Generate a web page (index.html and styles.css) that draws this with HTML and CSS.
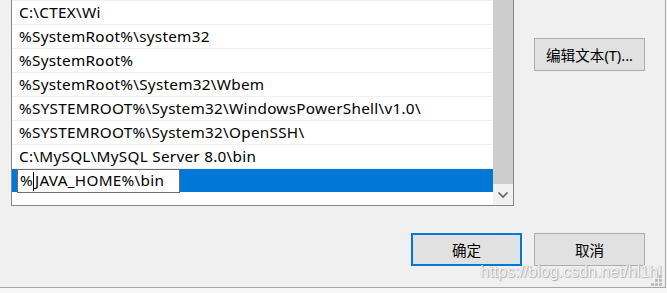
FILE: index.html
```html
<!DOCTYPE html>
<html lang="zh">
<head>
<meta charset="utf-8">
<link rel="stylesheet" href="styles.css">
</head>
<body>
<div class="dialog">
  <div class="main">
    <div class="listbox">
      <div class="rows">
        <div class="row">C:\CTEX\Wi</div>
        <div class="row">%SystemRoot%\system32</div>
        <div class="row">%SystemRoot%</div>
        <div class="row">%SystemRoot%\System32\Wbem</div>
        <div class="row">%SYSTEMROOT%\System32\WindowsPowerShell\v1.0\</div>
        <div class="row">%SYSTEMROOT%\System32\OpenSSH\</div>
        <div class="row">C:\MySQL\MySQL Server 8.0\bin</div>
        <div class="row selected"><span class="edit">%<span class="caret"></span>JAVA_HOME%\bin</span></div>
      </div>
      <div class="scrollbar">
        <div class="thumb"></div>
        <div class="arrow">
          <svg width="12" height="8" viewBox="0 0 12 8"><path d="M1.5 1.5 L6 6 L10.5 1.5" fill="none" stroke="#606060" stroke-width="1.6"/></svg>
        </div>
      </div>
    </div>
    <div class="side">
      <button class="btn">编辑文本(T)...</button>
    </div>
  </div>
  <div class="footer">
    <button class="btn primary">确定</button>
    <button class="btn">取消</button>
  </div>
</div>
<div class="watermark">https://blog.csdn.net/hl1hl</div>
<svg class="grip" width="12" height="12" viewBox="0 0 12 12">
  <rect x="8" y="0" width="3" height="3" fill="#bdbdbd"/>
  <rect x="4" y="4" width="3" height="3" fill="#bdbdbd"/>
  <rect x="8" y="4" width="3" height="3" fill="#bdbdbd"/>
  <rect x="0" y="8" width="3" height="3" fill="#bdbdbd"/>
  <rect x="4" y="8" width="3" height="3" fill="#bdbdbd"/>
  <rect x="8" y="8" width="3" height="3" fill="#bdbdbd"/>
</svg>
</body>
</html>
```

FILE: styles.css
```css
* { box-sizing: border-box; }
html, body { margin: 0; padding: 0; }
body {
  width: 667px;
  height: 293px;
  background: #f7f7f7;
  overflow: hidden;
  position: relative;
  font-family: "Noto Sans", "Noto Sans CJK SC", sans-serif;
  font-size: 15.3px;
  color: #000;
}
.dialog {
  width: 666px;
  height: 288px;
  background: #f0f0f0;
  border-right: 1px solid #a5a5a5;
  border-bottom: 1px solid #a5a5a5;
  display: flex;
  flex-direction: column;
}
.main {
  display: flex;
}
.listbox {
  margin-left: 11px;
  margin-top: -1px;
  width: 503px;
  height: 207px;
  border: 1px solid #828790;
  display: flex;
  background: #fff;
}
.rows {
  flex: 1;
  overflow: hidden;
  background: #fff;
}
.row {
  height: 24px;
  border-top: 1px solid #f0f0f0;
  padding-left: 7px;
  line-height: 23px;
  letter-spacing: 0.27px;
  white-space: nowrap;
}
.row.selected {
  background: #0078d7;
  padding-left: 5px;
  display: flex;
  align-items: flex-start;
}
.edit {
  display: inline-block;
  width: 163px;
  height: 24px;
  margin-bottom: -1px;
  border: 1px solid #6e6e6e;
  background: #fff;
  padding-left: 2px;
  line-height: 21px;
  position: relative;
}
.caret {
  display: inline-block;
  width: 1px;
  height: 19px;
  background: #000;
  vertical-align: -5px;
  margin-left: 0;
  margin-right: 1px;
}
.scrollbar {
  width: 20px;
  background: #f0f0f0;
  display: flex;
  flex-direction: column;
}
.thumb {
  height: 184px;
  background: #cdcdcd;
}
.arrow {
  flex: 1;
  display: flex;
  align-items: center;
  justify-content: center;
}
.side {
  padding-left: 20px;
  padding-top: 38px;
}
.btn {
  width: 111px;
  height: 33px;
  background: #e1e1e1;
  border: 1px solid #adadad;
  font-family: "Noto Sans", "Noto Sans CJK SC", sans-serif;
  font-size: 14.6px;
  color: #000;
  padding: 0;
  margin: 0;
}
.btn.primary {
  border: 2px solid #0078d7;
}
.footer {
  display: flex;
  justify-content: flex-end;
  gap: 12px;
  padding-top: 27px;
  padding-right: 20px;
}
.watermark {
  position: absolute;
  left: 480px;
  top: 263px;
  font-family: "Liberation Sans", sans-serif;
  font-size: 16px;
  color: rgba(255, 255, 255, 0.95);
  text-shadow: 1px 1px 1px rgba(0, 0, 0, 0.25), 0 0 1px rgba(0, 0, 0, 0.3);
  white-space: nowrap;
}
.grip {
  position: absolute;
  left: 651px;
  top: 275px;
}
```
